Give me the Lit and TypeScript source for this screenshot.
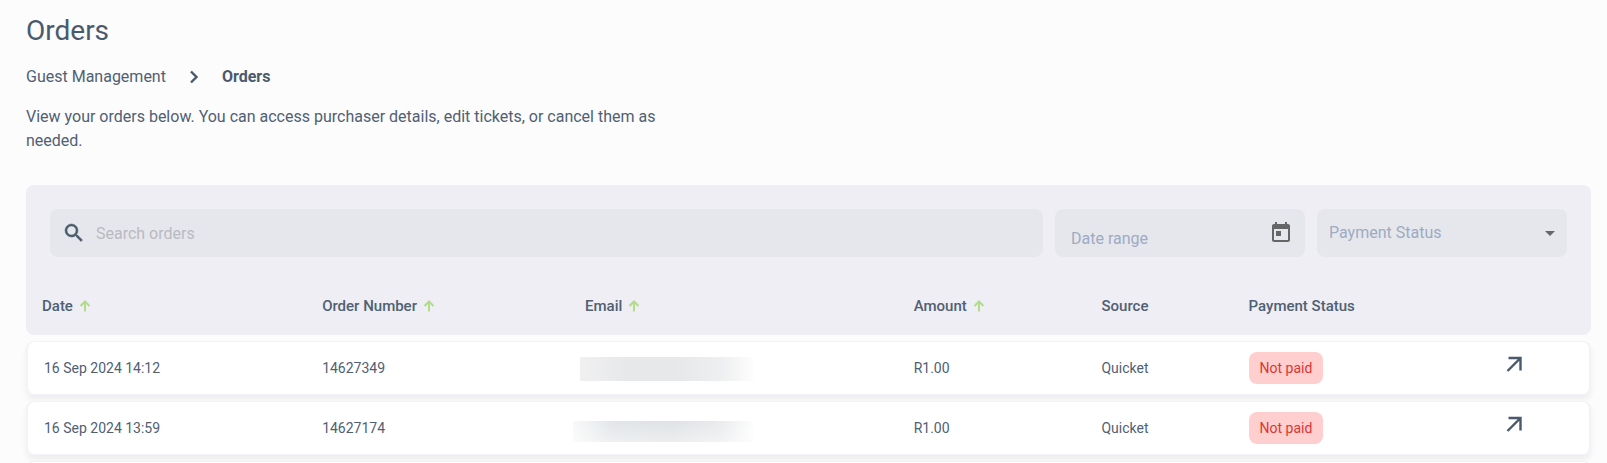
import { LitElement, html, css } from "lit";
import { customElement, state } from "lit/decorators.js";
import { classMap } from "lit/directives/class-map.js";

interface Order {
  date: string;
  number: string;
  amount: string;
  source: string;
  status: string;
}

interface Column {
  label: string;
  sortable: boolean;
}

const COLUMNS: Column[] = [
  { label: "Date", sortable: true },
  { label: "Order Number", sortable: true },
  { label: "Email", sortable: true },
  { label: "Amount", sortable: true },
  { label: "Source", sortable: false },
  { label: "Payment Status", sortable: false },
];

const sortIcon = html`<svg class="sort" viewBox="0 0 12 12" width="12" height="12" aria-hidden="true">
  <path d="M6 11.5V1.5M1.5 6L6 1.5L10.5 6" fill="none" stroke="#b2dc8c" stroke-width="2" />
</svg>`;

const openIcon = html`<svg viewBox="0 0 24 24" width="24" height="24" aria-hidden="true">
  <path d="M6.5 6H18.500V18.500M18 6.500L5.500 19" fill="none" stroke="#4a5a6d" stroke-width="2.400" />
</svg>`;

@customElement("app-root")
export class AppRoot extends LitElement {
  @state() private orders: Order[] = [
    { date: "16 Sep 2024 14:12", number: "14627349", amount: "R1.00", source: "Quicket", status: "Not paid" },
    { date: "16 Sep 2024 13:59", number: "14627174", amount: "R1.00", source: "Quicket", status: "Not paid" },
  ];

  static styles = css`
    :host {
      display: block;
      box-sizing: border-box;
      height: 100vh;
      overflow: hidden;
      padding: 13px 16px 0 26px;
      background: #fcfcfc;
      color: #506073;
      font: 400 16px/24px Roboto, sans-serif;
    }
    * { box-sizing: border-box; }
    h1 { margin: 0; font-size: 28px; line-height: 36px; font-weight: 400; color: #4a5a6d; }
    .crumbs {
      display: flex;
      align-items: center;
      gap: 20px;
      margin-top: 16px;
    }
    .crumbs a { color: inherit; text-decoration: none; }
    .crumbs strong { font-weight: 700; color: #4a5a6d; }
    .crumbs svg { display: block; }
    .intro { max-width: 640px; margin: 16px 0 32px; }
    .filters {
      display: grid;
      grid-template-columns: minmax(0, 1fr) 250px 250px;
      gap: 12px;
      padding: 24px 24px 20px;
      border-radius: 8px 8px 0 0;
      background: #efeef4;
    }
    .field {
      display: flex;
      align-items: center;
      height: 48px;
      border-radius: 8px;
      background: #e6e7ec;
    }
    .field svg { display: block; flex: none; }
    .search { padding: 0 12px; gap: 10px; }
    .date { padding: 0 12px 0 16px; }
    .date input { padding-top: 10px; }
    .status { padding: 0 12px; }
    input, select {
      flex: 1;
      min-width: 0;
      height: 48px;
      padding: 0;
      border: 0;
      outline: 0;
      background: none;
      color: #9dabc4;
      font: inherit;
      appearance: none;
    }
    input::placeholder { color: #9dabc4; opacity: 1; }
    .search input::placeholder { color: #b9bac1; }
    button { display: block; padding: 0; border: 0; background: none; cursor: pointer; }
    table {
      width: 100%;
      margin-top: -6px;
      table-layout: fixed;
      border-collapse: separate;
      border-spacing: 0 6px;
    }
    .c-date { width: 17.9%; }
    .c-number { width: 16.8%; }
    .c-email { width: 21%; }
    .c-amount { width: 12%; }
    .c-source { width: 9.4%; }
    .c-status { width: 16.2%; }
    th {
      height: 58px;
      padding: 0 16px;
      background: #efeef4;
      font-size: 15px;
      font-weight: 500;
      text-align: left;
    }
    th:first-child { border-bottom-left-radius: 8px; }
    th:last-child { border-bottom-right-radius: 8px; }
    .head { display: flex; align-items: center; gap: 6px; color: inherit; font: inherit; }
    .sort { display: block; }
    tbody tr {
      border-radius: 8px;
      box-shadow: 0 5px 6px rgba(0, 0, 0, 0.06);
    }
    td {
      height: 54px;
      padding: 0 16px;
      border: 0 solid #f2f2f8;
      border-width: 1px 0;
      background: #fff;
      font-size: 14px;
      line-height: 20px;
      vertical-align: middle;
    }
    td:first-child { border-left-width: 2px; border-radius: 8px 0 0 8px; }
    td:last-child { border-right-width: 2px; border-radius: 0 8px 8px 0; }
    .pill {
      display: inline-block;
      padding: 6px 11px;
      border-radius: 8px;
      background: #ffcfcf;
      color: #dc3535;
      vertical-align: middle;
    }
    .open { padding-bottom: 6px; }
    .masked {
      width: 173px;
      height: 24px;
      margin: 2px 0 0 -5px;
      background: linear-gradient(90deg, #f0f0f1, #e7e8ea 28%, #e7e8ea 55%, #eeeff0 82%, #fdfdfd);
    }
    .masked.wide {
      width: 180px;
      height: 21px;
      margin: 6px 0 0 -12px;
      background:
        linear-gradient(180deg, transparent, rgba(255, 255, 255, 0.4)),
        linear-gradient(90deg, #f8f9f9, #e2e5e8 22%, #dfe2e5 55%, #e9ebed 82%, #fdfdfd);
    }
  `;

  private renderOrder(order: Order, index: number) {
    return html`<tr>
      <td>${order.date}</td>
      <td>${order.number}</td>
      <td><div class=${classMap({ masked: true, wide: index % 2 === 1 })}></div></td>
      <td>${order.amount}</td>
      <td>${order.source}</td>
      <td><span class="pill">${order.status}</span></td>
      <td><button class="open" type="button" aria-label="Open order">${openIcon}</button></td>
    </tr>`;
  }

  render() {
    return html`
      <h1>Orders</h1>
      <nav class="crumbs" aria-label="Breadcrumb">
        <a href="#">Guest Management</a>
        <svg viewBox="0 0 16 16" width="16" height="16" aria-hidden="true">
          <path d="M5 2.500L10.500 8L5 13.500" fill="none" stroke="#4a5a6d" stroke-width="2.400" />
        </svg>
        <strong>Orders</strong>
      </nav>
      <p class="intro">
        View your orders below. You can access purchaser details, edit tickets, or cancel them as needed.
      </p>
      <form class="filters">
        <label class="field search">
          <svg viewBox="0 0 24 24" width="24" height="24" aria-hidden="true">
            <path fill="#4a5a6d" stroke="#4a5a6d" stroke-width="0.500" d="M15.500 14h-.79l-.28-.27A6.471 6.471 0 0 0 16 9.500 6.500 6.500 0 1 0 9.500 16c1.610 0 3.090-.59 4.230-1.570l.27.28v.79l5 4.990L20.490 19l-4.990-5zm-6 0C7.010 14 5 11.990 5 9.500S7.010 5 9.500 5 14 7.010 14 9.500 11.990 14 9.500 14z" />
          </svg>
          <input type="text" placeholder="Search orders" aria-label="Search orders" />
        </label>
        <div class="field date">
          <input type="text" placeholder="Date range" aria-label="Date range" />
          <button type="button" aria-label="Open calendar">
            <svg viewBox="0 0 24 24" width="24" height="24" aria-hidden="true">
              <path fill="#666" d="M19 3h-1V1h-2v2H8V1H6v2H5c-1.110 0-1.990.9-1.990 2L3 19c0 1.100.89 2 2 2h14c1.100 0 2-.9 2-2V5c0-1.100-.9-2-2-2zm0 16H5V8h14v11zM7 10h5v5H7z" />
            </svg>
          </button>
        </div>
        <label class="field status">
          <select aria-label="Payment Status"><option>Payment Status</option></select>
          <svg viewBox="0 0 10 5" width="10" height="5" aria-hidden="true"><path fill="#666" d="M0 0h10L5 5z" /></svg>
        </label>
      </form>
      <table>
        <colgroup>
          <col class="c-date" /><col class="c-number" /><col class="c-email" /><col class="c-amount" />
          <col class="c-source" /><col class="c-status" /><col />
        </colgroup>
        <thead>
          <tr>
            ${COLUMNS.map(
              (column) => html`<th scope="col">
                ${column.sortable
                  ? html`<button class="head" type="button">${column.label}${sortIcon}</button>`
                  : column.label}
              </th>`
            )}
            <th></th>
          </tr>
        </thead>
        <tbody>
          ${this.orders.map((order, index) => this.renderOrder(order, index))}
          <tr aria-hidden="true"><td></td><td colspan="5"></td><td></td></tr>
        </tbody>
      </table>
    `;
  }
}
